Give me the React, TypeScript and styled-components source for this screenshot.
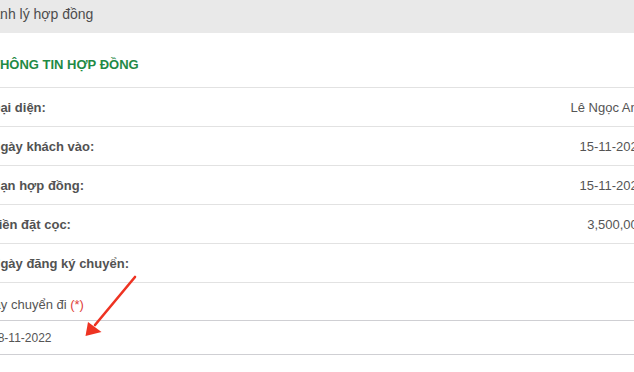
import React, { FunctionComponent } from 'react';
import styled, { createGlobalStyle } from 'styled-components';

const GlobalStyle = createGlobalStyle`
  body {
    margin: 0;
    background: #fff;
    font-family: "Liberation Sans", Arial, sans-serif;
    overflow: hidden;
  }
`;

const Page = styled.div`
  position: relative;
  width: 634px;
  height: 372px;
  overflow: hidden;
  background: #fff;
`;

// the card is wider than the viewport; its edges fall outside the picture
const Sheet = styled.div`
  margin-left: -30px;
  width: 695px;
`;

const HeaderBar = styled.div`
  height: 33px;
  padding-left: 6px;
  background: #e9e9e9;
  color: #4d4d4d;
  font-size: 14px;
  line-height: 29px;
`;

const SectionTitle = styled.div`
  box-sizing: border-box;
  display: flex;
  align-items: center;
  height: 55px;
  padding: 9px 0 0 22px;
  border-bottom: 1px solid #e2e2e2;
  color: #1f8a45;
  font-size: 13px;
  font-weight: bold;
`;

const InfoRow = styled.div`
  box-sizing: border-box;
  display: flex;
  align-items: center;
  justify-content: space-between;
  height: 39px;
  padding: 0 20px 0 21px;
  border-bottom: 1px solid #e2e2e2;
  font-size: 13px;
`;

const Label = styled.span`
  color: #525252;
  font-weight: bold;
`;

const Value = styled.span`
  color: #555;
`;

const FormGroup = styled.div`
  display: flex;
  flex-direction: column;
`;

const FieldLabel = styled.label`
  padding: 14px 0 8px 7px;
  color: #555;
  font-size: 13px;
  line-height: 15px;
`;

const Required = styled.span`
  color: #e0413a;
`;

const DateInput = styled.input`
  box-sizing: border-box;
  height: 35px;
  width: 100%;
  margin: 0;
  padding: 0 0 0 20px;
  border: 1px solid #cfcfd3;
  outline: none;
  color: #555;
  font-family: inherit;
  font-size: 12px;
  background: #fff;
`;

const ArrowMark = styled.svg`
  position: absolute;
  left: 0;
  top: 0;
  pointer-events: none;
`;

const rows = [
  { label: 'Đại diện:', value: 'Lê Ngọc Anh' },
  { label: 'Ngày khách vào:', value: '15-11-2022' },
  { label: 'Hạn hợp đồng:', value: '15-11-2022' },
  { label: 'Tiền đặt cọc:', value: '3,500,000' },
  { label: 'Ngày đăng ký chuyển:', value: '' },
];

const App: FunctionComponent = () => {
  return (
    <Page>
      <GlobalStyle />
      <Sheet>
        <HeaderBar>Thanh lý hợp đồng</HeaderBar>
        <SectionTitle>THÔNG TIN HỢP ĐỒNG</SectionTitle>
        {rows.map(row => (
          <InfoRow key={row.label}>
            <Label>{row.label}</Label>
            <Value>{row.value}</Value>
          </InfoRow>
        ))}
        <FormGroup>
          <FieldLabel>
            Ngày chuyển đi <Required>(*)</Required>
          </FieldLabel>
          <DateInput type="text" value="18-11-2022" readOnly />
        </FormGroup>
      </Sheet>
      <ArrowMark width="634" height="372" viewBox="0 0 634 372">
        <line
          x1="135"
          y1="277"
          x2="95"
          y2="325"
          stroke="#ee3322"
          strokeWidth="2.6"
          strokeLinecap="round"
        />
        <polygon points="85.5,336 88,322 101.5,332" fill="#ee3322" />
      </ArrowMark>
    </Page>
  );
};

export default App;
